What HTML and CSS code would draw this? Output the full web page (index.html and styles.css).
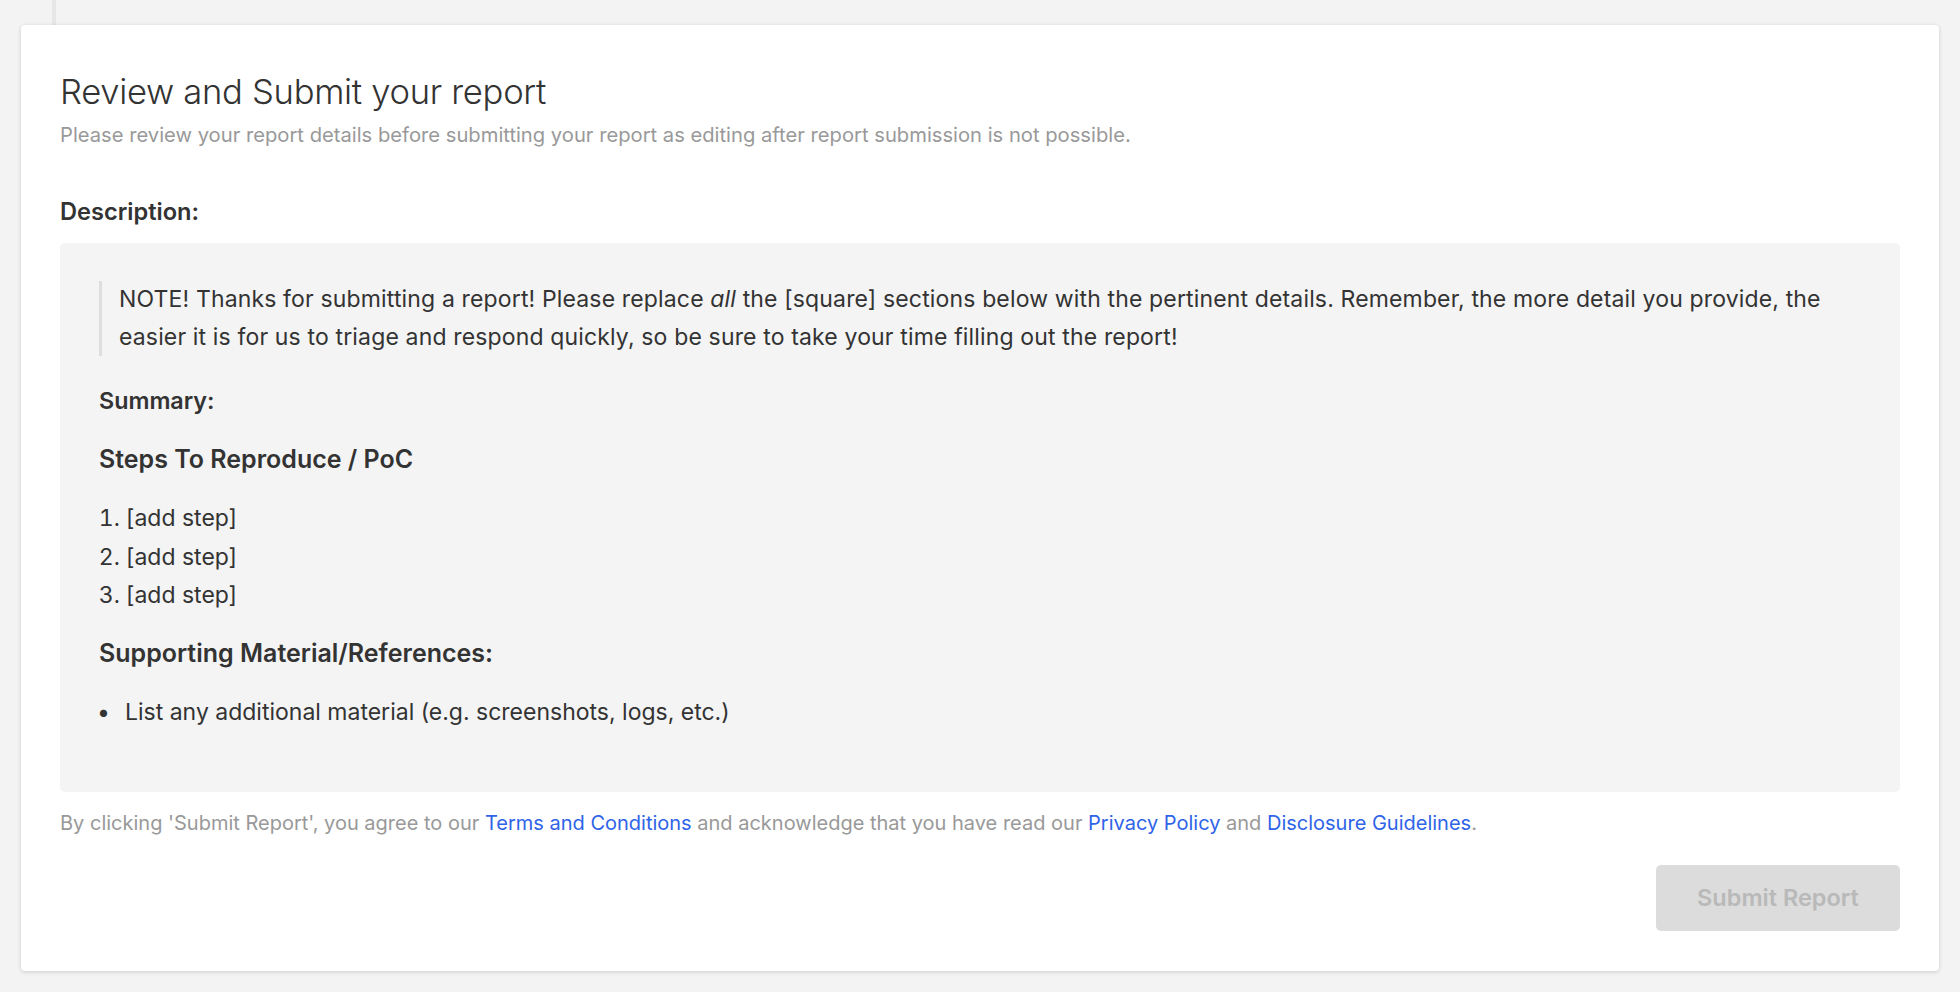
FILE: index.html
```html
<!DOCTYPE html>
<html lang="en">
<head>
<meta charset="utf-8">
<title>Review and Submit your report</title>
<link rel="stylesheet" href="styles.css">
</head>
<body>
<div class="rail"></div>
<section class="card">
  <h1 class="title">Review and Submit your report</h1>
  <p class="subtitle">Please review your report details before submitting your report as editing after report submission is not possible.</p>
  <h2 class="label">Description:</h2>
  <div class="preview">
    <blockquote class="note">NOTE! Thanks for submitting a report! Please replace <em>all</em> the [square] sections below with the pertinent details. Remember, the more detail you provide, the easier it is for us to triage and respond quickly, so be sure to take your time filling out the report!</blockquote>
    <h3 class="h-small">Summary:</h3>
    <h3 class="h-large">Steps To Reproduce / PoC</h3>
    <ol class="steps">
      <li>[add step]</li>
      <li>[add step]</li>
      <li>[add step]</li>
    </ol>
    <h3 class="h-large h-support">Supporting Material/References:</h3>
    <ul class="bullets">
      <li>List any additional material (e.g. screenshots, logs, etc.)</li>
    </ul>
  </div>
  <p class="legal">By clicking 'Submit Report', you agree to our <a href="#">Terms and Conditions</a> and acknowledge that you have read our <a href="#">Privacy Policy</a> and <a href="#">Disclosure Guidelines</a>.</p>
  <div class="actions">
    <button class="submit" type="button" disabled>Submit Report</button>
  </div>
</section>
</body>
</html>
```
FILE: styles.css
```css
* { box-sizing: border-box; }
html, body { margin: 0; padding: 0; }
body {
  background: #f3f3f3;
  font-family: Inter, Lato, "Noto Sans", sans-serif;
  color: #333;
  height: 992px;
  overflow: hidden;
}
.rail {
  width: 4px;
  height: 25px;
  margin-left: 52px;
  background: #e6e6e6;
}
.card {
  margin: 0 21px;
  background: #fff;
  border-radius: 4px;
  box-shadow: 0 1px 4px rgba(0,0,0,0.16);
  padding: 44px 39px 40px 39px;
}
.title {
  margin: 0;
  font-size: 34.6px;
  font-weight: 300;
  line-height: 44px;
  letter-spacing: -0.3px;
  color: #333;
}
.subtitle {
  margin: 9px 0 0;
  font-size: 20.2px;
  line-height: 26px;
  color: #999;
}
.label {
  margin: 49px 0 0;
  font-size: 23.6px;
  font-weight: 600;
  line-height: 30px;
  color: #333;
}
.preview {
  margin-top: 16px;
  background: #f4f4f4;
  border-radius: 5px;
  padding: 38px 39px 60px 39px;
  font-size: 23px;
  line-height: 37.5px;
  color: #333;
}
.note {
  margin: 0;
  border-left: 3px solid #dedede;
  padding-left: 17px;
  letter-spacing: 0.15px;
}
.note em { font-style: italic; }
.h-small {
  margin: 26px 0 0;
  font-size: 23.3px;
  font-weight: 600;
  line-height: 37.5px;
}
.h-large {
  margin: 21px 0 0;
  font-size: 25px;
  font-weight: 600;
  line-height: 37.5px;
}
.h-support { margin-top: 20px; }
.steps {
  margin: 21px 0 0;
  padding-left: 27px;
}
.steps li { line-height: 38.5px; }
.bullets {
  list-style: none;
  margin: 21px 0 0;
  padding: 0;
}
.bullets li {
  display: flex;
  line-height: 38.5px;
}
.bullets li::before {
  content: "\2022";
  flex: 0 0 28px;
  margin-left: -2px;
}
.legal {
  margin: 18px 0 0;
  font-size: 20px;
  line-height: 26px;
  color: #999;
}
.legal a { color: #2f63e8; text-decoration: none; }
.actions {
  display: flex;
  justify-content: flex-end;
  margin-top: 29px;
}
.submit {
  width: 244px;
  height: 66px;
  border: none;
  border-radius: 5px;
  background: #dcdcdc;
  color: #b9b9b9;
  font-family: Inter, Lato, "Noto Sans", sans-serif;
  font-size: 23.5px;
  font-weight: 600;
}
```
